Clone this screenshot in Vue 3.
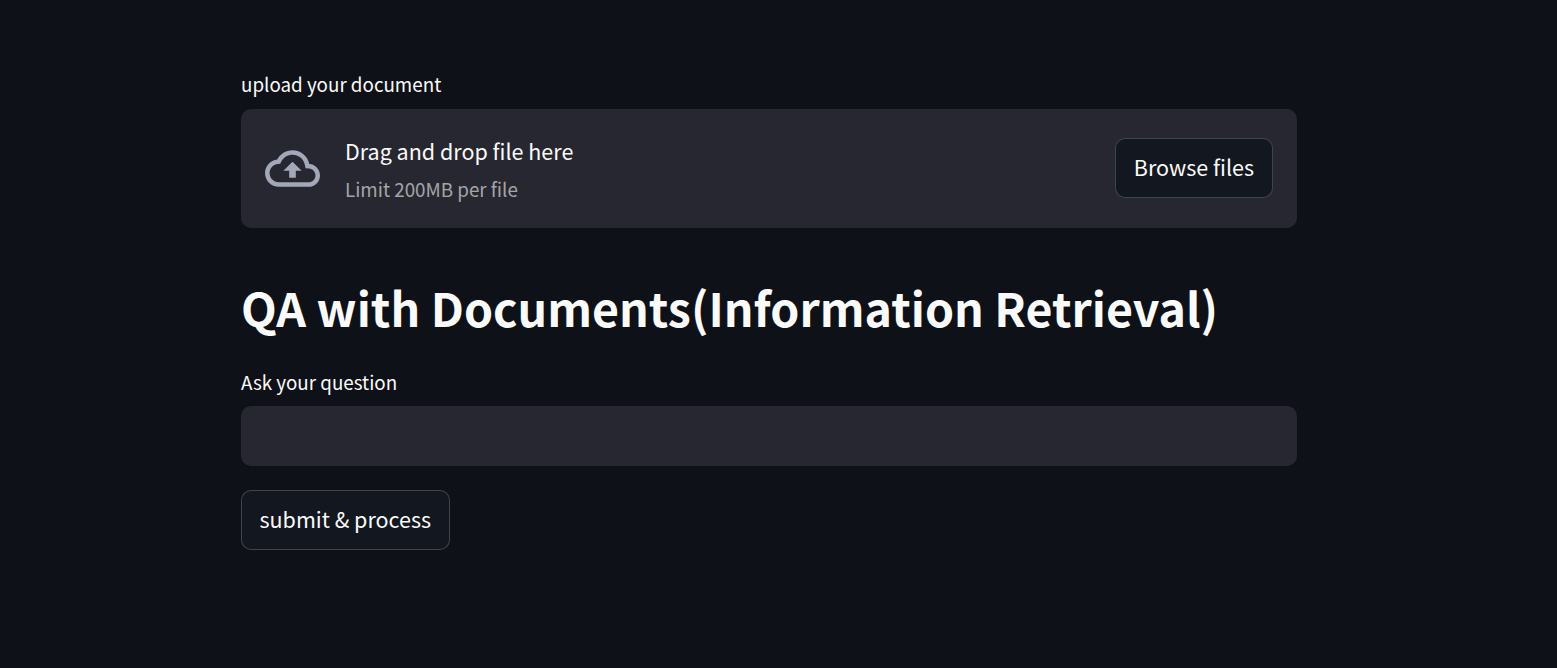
<script setup>
const limitText = "Limit 200MB per file";
</script>

<template>
  <main class="page">
    <label class="field-label upload-label">upload your document</label>
    <section class="dropzone">
      <div class="drop-info">
        <svg class="cloud" viewBox="0 0 24 24" aria-hidden="true">
          <path d="M19.35 10.04C18.67 6.59 15.64 4 12 4 9.11 4 6.6 5.64 5.35 8.04 2.34 8.36 0 10.91 0 14c0 3.31 2.69 6 6 6h13c2.76 0 5-2.24 5-5 0-2.64-2.05-4.78-4.65-4.96zM19 18H6c-2.21 0-4-1.79-4-4 0-2.05 1.53-3.76 3.56-3.97l1.07-.11.5-.95C8.08 7.14 9.94 6 12 6c2.62 0 4.88 1.86 5.39 4.43l.3 1.5 1.53.11c1.56.1 2.78 1.41 2.78 2.96 0 1.65-1.35 3-3 3zM8 13h2.55v3h2.9v-3H16l-4-4z" />
        </svg>
        <div class="drop-text">
          <div class="drop-title">Drag and drop file here</div>
          <div class="drop-limit">{{ limitText }}</div>
        </div>
      </div>
      <button class="btn browse" type="button">Browse files</button>
    </section>

    <h1 class="title">QA with Documents(Information Retrieval)</h1>

    <label class="field-label question-label" for="question">Ask your question</label>
    <input id="question" class="question" type="text" />

    <button class="btn submit" type="button">submit &amp; process</button>
  </main>
</template>

<style scoped>
.page {
  box-sizing: border-box;
  width: 1056px;
  margin-left: 241px;
  padding-top: 71px;
  display: flex;
  flex-direction: column;
  align-items: flex-start;
  color: #fafafa;
  font-family: "Noto Sans CJK KR", "Noto Sans", sans-serif;
}
.field-label {
  display: block;
  font-size: 18.8px;
  line-height: 26px;
  height: 26px;
}
.upload-label {
  margin-bottom: 12px;
}
.dropzone {
  box-sizing: border-box;
  width: 100%;
  height: 119px;
  padding: 0 24px 1px;
  background: #262730;
  border-radius: 10px;
  display: flex;
  align-items: center;
  justify-content: space-between;
}
.drop-info {
  display: flex;
  align-items: center;
  gap: 25px;
}
.cloud {
  width: 55px;
  height: 55px;
  fill: #a3a8b8;
}
.drop-text {
  display: flex;
  flex-direction: column;
  gap: 11px;
  padding-top: 1px;
}
.drop-title {
  font-size: 21.5px;
  line-height: 29px;
}
.drop-limit {
  font-size: 18.8px;
  line-height: 26px;
  color: rgba(250, 250, 250, 0.6);
}
.btn {
  box-sizing: border-box;
  height: 60px;
  padding: 0 18px 4px;
  background: #13171f;
  color: #fafafa;
  border: 1px solid rgba(250, 250, 250, 0.2);
  border-radius: 10px;
  font-family: inherit;
  font-size: 21.5px;
}
.title {
  margin: 46px 0 0;
  font-size: 46.5px;
  line-height: 66px;
  font-weight: 700;
}
.question-label {
  margin-top: 29px;
  margin-bottom: 11px;
}
.question {
  box-sizing: border-box;
  width: 100%;
  height: 60px;
  background: #262730;
  border: 0;
  border-radius: 10px;
}
.submit {
  margin-top: 24px;
  padding: 0 17.5px 4px;
}
</style>

<style>
html,
body {
  background: #0e1117;
}
</style>
